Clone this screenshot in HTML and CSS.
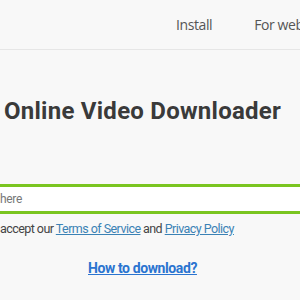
FILE: index.html
```html
<!DOCTYPE html>
<html>
<head>
<meta charset="utf-8">
<link rel="stylesheet" href="styles.css">
</head>
<body>
<header class="topbar">
  <nav class="nav">
    <a class="nav-item">Install</a>
    <a class="nav-item">For web</a>
  </nav>
</header>
<main class="main">
  <h1 class="title">Online Video Downloader</h1>
  <div class="search">
    <input class="search-input" type="text" placeholder="here">
  </div>
  <p class="terms">accept our <a class="link">Terms of Service</a> and <a class="link">Privacy Policy</a></p>
  <p class="howto"><a class="howto-link">How to download?</a></p>
</main>
</body>
</html>
```
FILE: styles.css
```css
html, body {
  margin: 0;
  padding: 0;
  background: #f8f8f8;
  overflow: hidden;
  width: 300px;
  height: 300px;
}
.topbar {
  height: 49px;
  border-bottom: 1px solid #e6e6e6;
  background: #f8f8f8;
  display: flex;
  align-items: center;
  overflow: hidden;
}
.nav {
  display: flex;
  padding-left: 176px;
  gap: 42px;
  white-space: nowrap;
}
.nav-item {
  font-family: "Open Sans", sans-serif;
  font-size: 14px;
  letter-spacing: -0.4px;
  color: #555;
}
.main {
  display: flex;
  flex-direction: column;
}
.title {
  margin: 46px 0 0 4px;
  font-family: Roboto, sans-serif;
  font-weight: 700;
  font-size: 24px;
  letter-spacing: 0.25px;
  line-height: 30px;
  color: #3a3a3a;
  white-space: nowrap;
}
.search {
  margin: 58px -10px 0 -10px;
}
.search-input {
  box-sizing: border-box;
  width: 100%;
  height: 30px;
  border: 3px solid #7ac520;
  background: #fff;
  padding: 0 0 0 7px;
  font-family: Roboto, sans-serif;
  font-size: 12px;
  letter-spacing: -0.3px;
  outline: none;
}
.search-input::placeholder {
  color: #777;
}
.terms {
  margin: 7px 0 0 0;
  font-family: Roboto, sans-serif;
  font-size: 12.5px;
  letter-spacing: -0.55px;
  line-height: 16px;
  color: #444;
  white-space: nowrap;
}
.link {
  color: #3b82b5;
  text-decoration: underline;
}
.howto {
  margin: 22px 0 0 88px;
  font-family: Roboto, sans-serif;
  font-size: 14px;
  font-weight: 700;
  letter-spacing: -0.4px;
  line-height: 18px;
}
.howto-link {
  color: #2a74d0;
  text-decoration: underline;
}
```
